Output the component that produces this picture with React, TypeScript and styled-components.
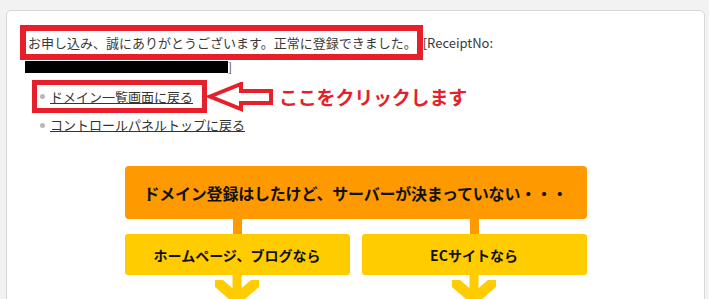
import React from "react";
import styled, { createGlobalStyle } from "styled-components";

const RED = "#e61f2a";

const GlobalStyle = createGlobalStyle`
  html, body {
    margin: 0;
    padding: 0;
    background: #f2f2f2;
    overflow: hidden;
  }
  body {
    font-family: "Noto Sans CJK JP", "Noto Sans", sans-serif;
    color: #333;
  }
`;

const Page = styled.div`
  padding: 10px 4px 0 6px;
  height: 299px;
  box-sizing: border-box;
`;

const Card = styled.div`
  background: #fff;
  border: 1px solid #d6d6d6;
  border-radius: 5px;
  padding: 14px 13px 60px;
  min-height: 320px;
  box-sizing: border-box;
`;

const Message = styled.div`
  font-size: 13px;
  color: #3a3a3a;
`;

const MessageRow = styled.div`
  display: flex;
  align-items: center;
`;

const Highlight = styled.span`
  border: 6px solid ${RED};
  padding: 0 0 0 2px;
  line-height: 23px;
`;

const Receipt = styled.span`
  margin-left: 0;
  line-height: 23px;
`;

const Redaction = styled.span`
  display: inline-block;
  margin-left: 5px;
  width: 203px;
  height: 12px;
  background: #000;
`;

const Bracket = styled.span`
  font-size: 12px;
  line-height: 14px;
  color: #555;
`;

const LinkList = styled.ul`
  list-style: none;
  margin: 6px 0 0;
  padding: 0;
`;

const LinkItem = styled.li<{ $indent: number; $height: number }>`
  display: flex;
  align-items: center;
  height: ${(p) => p.$height}px;
  padding-left: ${(p) => p.$indent}px;
`;

const LinkBox = styled.span`
  display: flex;
  align-items: center;
  height: 23px;
  border: 5px solid ${RED};
  padding: 0 9px 0 3px;
`;

const Bullet = styled.span`
  width: 5px;
  height: 5px;
  border-radius: 50%;
  background: #b8b8b8;
  margin-right: 5px;
  flex: none;
`;

const Link = styled.a`
  font-size: 13px;
  color: #333;
  text-decoration: underline;
  line-height: 18px;
  cursor: pointer;
`;

const Callout = styled.span`
  margin-left: 4px;
  font-size: 19px;
  font-weight: 700;
  color: ${RED};
  letter-spacing: -0.2px;
`;

const Flow = styled.div`
  width: 462px;
  margin: 29px auto 0;
`;

const TopBox = styled.div`
  height: 53px;
  background: #ff9900;
  border-radius: 4px;
  display: flex;
  align-items: center;
  justify-content: center;
  font-size: 16px;
  font-weight: 700;
  color: #111;
  letter-spacing: -0.2px;
`;

const Branches = styled.div`
  display: grid;
  grid-template-columns: 1fr 1fr;
  column-gap: 12px;
`;

const Branch = styled.div`
  display: flex;
  flex-direction: column;
  align-items: center;
`;

const Stem = styled.div<{ $color: string }>`
  width: 9px;
  height: 15px;
  background: ${(p) => p.$color};
`;

const SubBox = styled.div`
  align-self: stretch;
  height: 41px;
  background: #ffcc00;
  border-radius: 3px;
  display: flex;
  align-items: center;
  justify-content: center;
  font-size: 14px;
  font-weight: 700;
  color: #111;
`;

const ArrowSvg = styled.svg`
  display: block;
`;

const PointerArrow = () => (
  <svg width="68" height="30" viewBox="0 0 68 30" style={{ flex: "none" }}>
    <polygon
      points="3,14.5 34,2 34,9 64,9 64,21 34,21 34,27"
      fill="#fff"
      stroke={RED}
      strokeWidth="4"
      strokeLinejoin="miter"
    />
  </svg>
);

const DownArrow = () => (
  <ArrowSvg width="44" height="40" viewBox="0 0 44 40">
    <rect x="17.5" y="0" width="9" height="30" fill="#ffcc00" />
    <polygon
      points="0,5 8,5 22,17 36,5 44,5 44,12 22,31 0,12"
      fill="#ffcc00"
    />
  </ArrowSvg>
);

const branches = ["ホームページ、ブログなら", "ECサイトなら"];

export default function App() {
  return (
    <>
      <GlobalStyle />
      <Page>
        <Card>
          <Message>
            <MessageRow>
              <Highlight>
                お申し込み、誠にありがとうございます。正常に登録できました。
              </Highlight>
              <Receipt>[ReceiptNo:</Receipt>
            </MessageRow>
            <MessageRow>
              <Redaction />
              <Bracket>]</Bracket>
            </MessageRow>
          </Message>

          <LinkList>
            <LinkItem $indent={12} $height={33}>
              <LinkBox>
                <Bullet />
                <Link>ドメイン一覧画面に戻る</Link>
              </LinkBox>
              <PointerArrow />
              <Callout>ここをクリックします</Callout>
            </LinkItem>
            <LinkItem $indent={20} $height={24}>
              <Bullet />
              <Link>コントロールパネルトップに戻る</Link>
            </LinkItem>
          </LinkList>

          <Flow>
            <TopBox>ドメイン登録はしたけど、サーバーが決まっていない・・・</TopBox>
            <Branches>
              {branches.map((label) => (
                <Branch key={label}>
                  <Stem $color="#ff9900" />
                  <SubBox>{label}</SubBox>
                  <DownArrow />
                </Branch>
              ))}
            </Branches>
          </Flow>
        </Card>
      </Page>
    </>
  );
}
